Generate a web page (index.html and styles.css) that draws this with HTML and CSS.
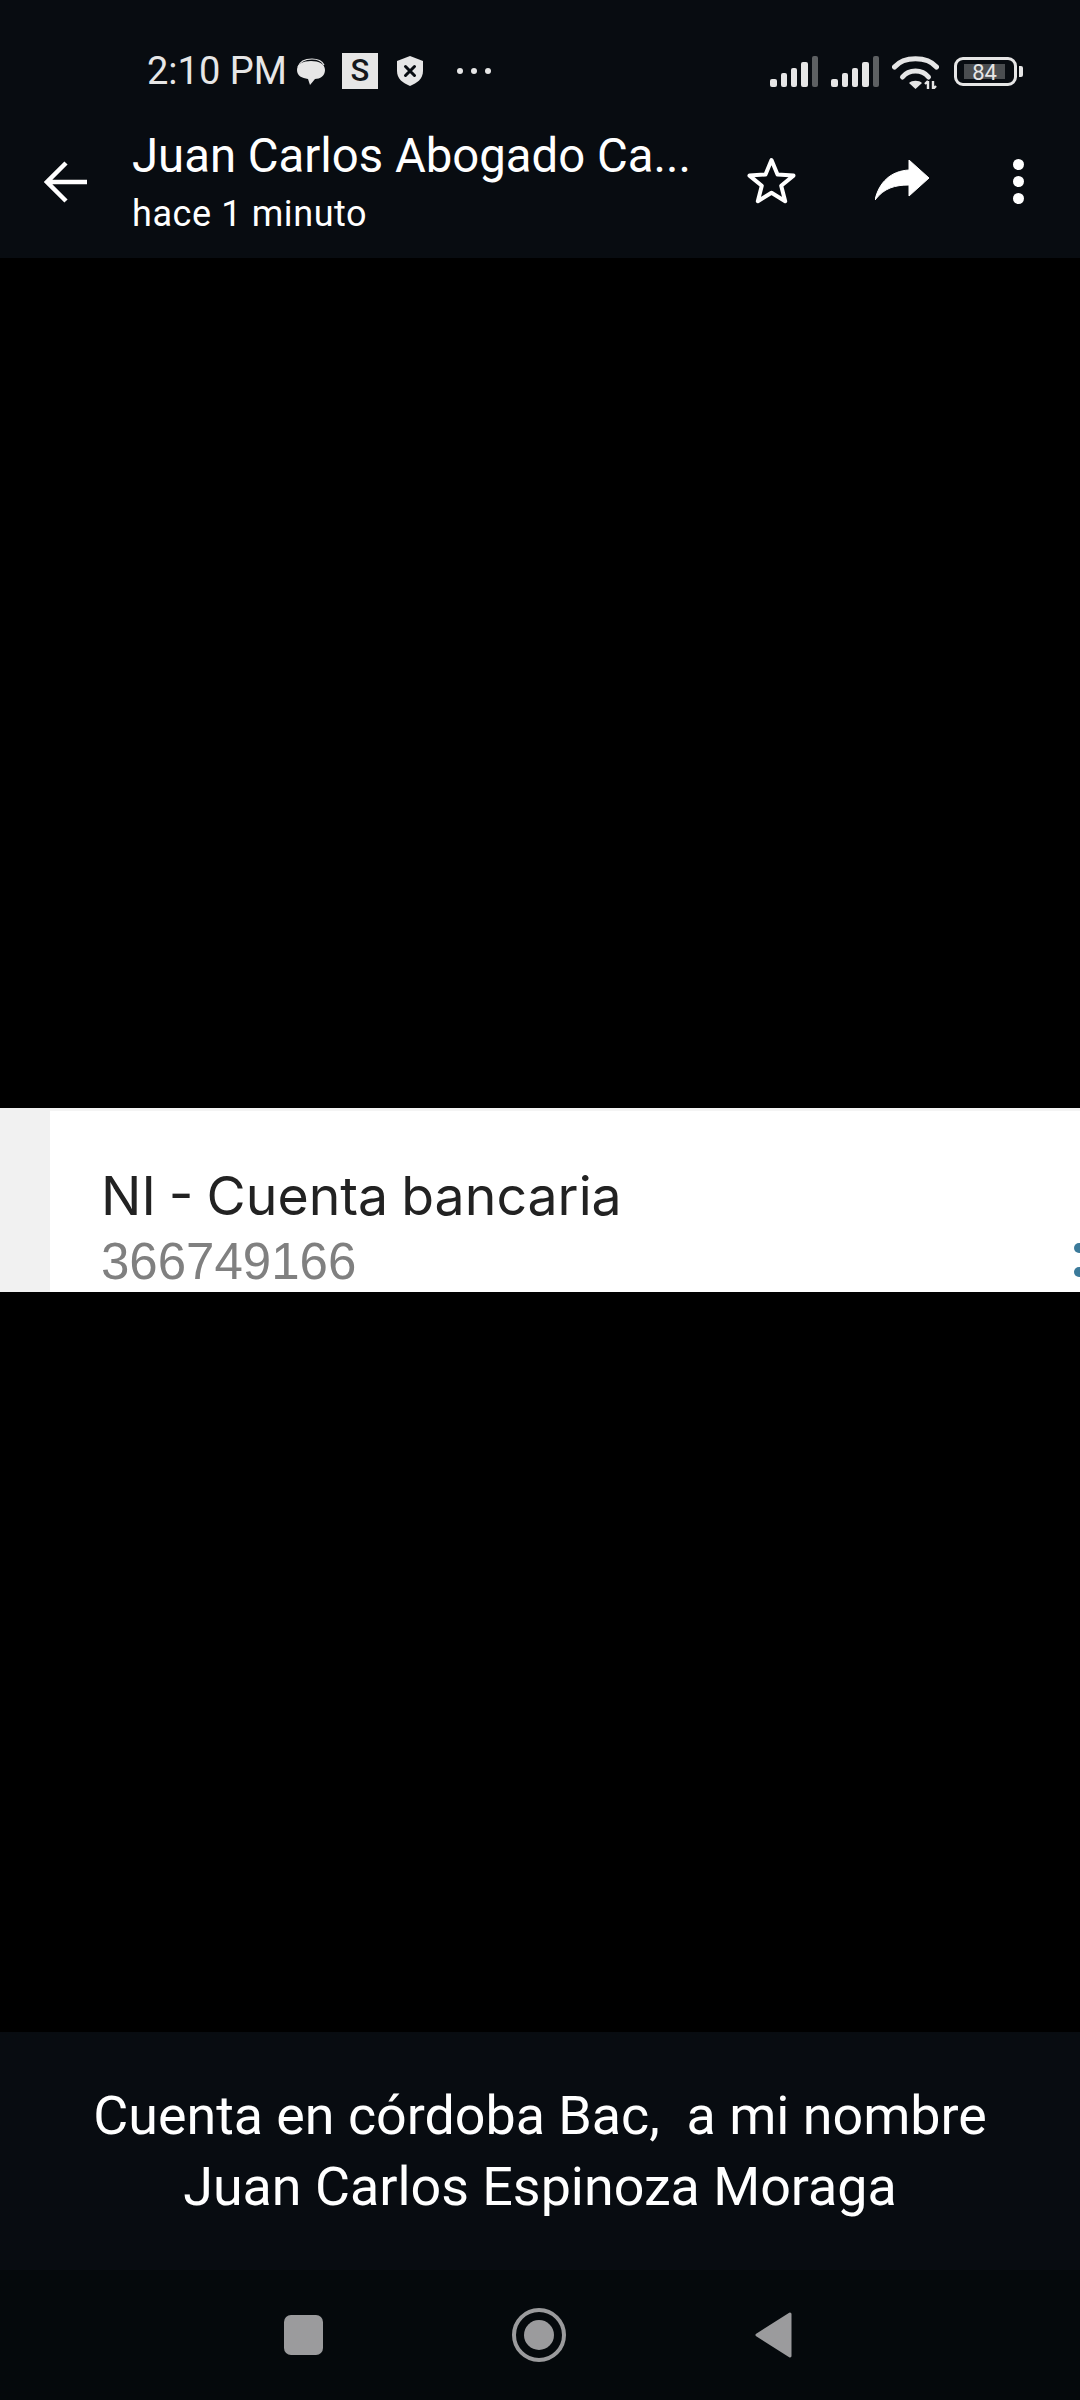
FILE: index.html
```html
<!DOCTYPE html>
<html lang="es">

<head>
  <meta charset="UTF-8">
  <meta name="viewport" content="width=device-width, initial-scale=1">
  <title>Juan Carlos Abogado Ca...</title>
  <link rel="stylesheet" href="styles.css">
</head>

<body>
  <div id="app">
    <div class="status-bar">
      <div class="status-left">
        <span class="time">2:10 PM</span>
        <svg class="ic-chat" width="28" height="27" viewBox="0 0 28 27">
          <path d="M1 9C3 3 8 1 15 1C21 1 25 3 27 7" fill="none" stroke="#e6e6e6" stroke-width="1.2" />
          <path d="M0 12C0 6 6 3 14 3C22 3 28 6 28 12C28 18 23 21 18 21L13 27L11 21C5 20 0 18 0 12Z" fill="#e6e6e6" />
        </svg>
        <span class="s-badge">S</span>
        <svg class="ic-shield" width="26" height="30" viewBox="0 0 26 30">
          <path d="M13 0L26 5V15C26 23 20 27 13 30C6 27 0 23 0 15V5Z" fill="#e6e6e6" />
          <path d="M8.5 10.5L17.5 19.5M17.5 10.5L8.5 19.5" stroke="#080c11" stroke-width="3" stroke-linecap="round" />
        </svg>
        <span class="more-dots"><i></i><i></i><i></i></span>
      </div>
      <div class="status-right">
        <svg class="ic-signal" width="48" height="31" viewBox="0 0 48 31">
          <rect x="0" y="23" width="7" height="8" rx="2" fill="#e6e6e6" />
          <rect x="11" y="17" width="6" height="14" rx="2" fill="#e6e6e6" />
          <rect x="21" y="12" width="6" height="19" rx="2" fill="#e6e6e6" />
          <rect x="31" y="6" width="7" height="25" rx="2" fill="#e6e6e6" />
          <rect x="42" y="0" width="6" height="31" rx="2" fill="#5d6062" />
        </svg>
        <svg class="ic-signal" width="48" height="31" viewBox="0 0 48 31">
          <rect x="0" y="23" width="7" height="8" rx="2" fill="#e6e6e6" />
          <rect x="11" y="17" width="6" height="14" rx="2" fill="#e6e6e6" />
          <rect x="21" y="12" width="6" height="19" rx="2" fill="#e6e6e6" />
          <rect x="31" y="6" width="7" height="25" rx="2" fill="#e6e6e6" />
          <rect x="42" y="0" width="6" height="31" rx="2" fill="#5d6062" />
        </svg>
        <svg class="ic-wifi" width="47" height="35" viewBox="0 0 47 35">
          <path d="M2.5 13C12 2 35 2 44.5 13" fill="none" stroke="#e6e6e6" stroke-width="5" stroke-linecap="round" />
          <path d="M10.5 23C17 15 30 15 36.5 23" fill="none" stroke="#e6e6e6" stroke-width="5" stroke-linecap="round" />
          <path d="M23.5 35L17 29C20 26 27 26 30 29Z" fill="#e6e6e6" />
          <path d="M36 35V27M33 30L36 27M41 27V35M41 35L44 32" fill="none" stroke="#e6e6e6" stroke-width="2.4" />
        </svg>
        <div class="battery">
          <div class="battery-box">
            <div class="battery-fill">84</div>
          </div>
          <div class="battery-cap"></div>
        </div>
      </div>
    </div>

    <header class="toolbar">
      <svg class="ic-back" width="44" height="42" viewBox="0 0 44 42">
        <path d="M43 21H4M22 2L3 21L22 40" fill="none" stroke="#fff" stroke-width="4.5" />
      </svg>
      <div class="title-block">
        <div class="title">Juan Carlos Abogado Ca...</div>
        <div class="subtitle">hace 1 minuto</div>
      </div>
      <svg class="ic-star" width="49" height="47" viewBox="0 0 49 47">
        <path d="M24.5 3L30.5 17.5L46.5 18.6L34.2 28.7L38.2 44.2L24.5 35.8L10.8 44.2L14.8 28.7L2.5 18.6L18.5 17.5Z"
          fill="none" stroke="#fff" stroke-width="4" stroke-linejoin="round" />
      </svg>
      <svg class="ic-share" width="54" height="40" viewBox="0 0 54 40">
        <path d="M34 0L54 18L34 36V25C20 25 9 28 0 40C4 22 16 11 34 10Z" fill="#fff" stroke="#fff" stroke-width="1" stroke-linejoin="round" />
      </svg>
      <span class="menu-dots"><i></i><i></i><i></i></span>
    </header>

    <main class="viewer">
      <div class="shot">
        <div class="shot-side"></div>
        <div class="shot-body">
          <div class="shot-title">NI - Cuenta bancaria</div>
          <div class="shot-number">366749166</div>
          <span class="shot-chevron"><i></i><i></i></span>
        </div>
      </div>
    </main>

    <div class="caption">Cuenta en córdoba Bac,&nbsp; a mi nombre<br>Juan Carlos Espinoza Moraga</div>

    <nav class="nav-bar">
      <span class="nav-square"></span>
      <span class="nav-home"><i></i></span>
      <svg class="nav-back" width="37" height="46" viewBox="0 0 37 46">
        <path d="M35 2L2 23L35 44Z" fill="#9b9b9d" stroke="#9b9b9d" stroke-width="3" stroke-linejoin="round" />
      </svg>
    </nav>
  </div>
</body>

</html>
```

FILE: styles.css
```css
* {
  box-sizing: border-box;
}

html,
body {
  margin: 0;
  background: #000;
}

#app {
  width: 1080px;
  height: 2400px;
  display: flex;
  flex-direction: column;
  overflow: hidden;
  font-family: Roboto, sans-serif;
  color: #fff;
}

/* status bar */
.status-bar {
  height: 106px;
  padding: 36px 57px 0 147px;
  background: #080c11;
  display: flex;
  justify-content: space-between;
  align-items: center;
}

.status-left,
.status-right {
  display: flex;
  align-items: center;
}

.time {
  font-size: 38px;
  color: #e6e6e6;
  line-height: 40px;
  width: 150px;
}

.ic-chat {
  margin-right: 17px;
}

.s-badge {
  width: 36px;
  height: 36px;
  margin-right: 19px;
  background: #e6e6e6;
  color: #14181c;
  font-size: 31px;
  font-weight: 500;
  line-height: 36px;
  text-align: center;
}

.more-dots {
  display: flex;
  gap: 8px;
  margin-left: 34px;
}

.more-dots i {
  width: 6px;
  height: 6px;
  border-radius: 50%;
  background: #e6e6e6;
}

.status-right {
  gap: 13px;
}

.status-right .ic-wifi {
  margin-right: 2px;
}

.battery {
  display: flex;
  align-items: center;
  gap: 2px;
}

.battery-box {
  width: 63px;
  height: 29px;
  padding: 4px 5px;
  border: 3px solid #e6e6e6;
  border-radius: 9px;
}

.battery-fill {
  width: 41px;
  height: 100%;
  margin-left: 2px;
  background: #4a4d50;
  color: #e6e6e6;
  font-size: 22px;
  line-height: 18px;
  text-align: center;
}

.battery-cap {
  width: 4px;
  height: 11px;
  background: #e6e6e6;
  border-radius: 0 2px 2px 0;
}

/* toolbar */
.toolbar {
  height: 152px;
  padding: 0 56px 0 44px;
  background: #080c11;
  display: flex;
  align-items: center;
}

.ic-star,
.ic-share {
  margin-bottom: 4px;
}

.title-block {
  width: 615px;
  margin-left: 44px;
  margin-top: 5px;
}

.title {
  font-size: 47.3px;
  line-height: 52px;
}

.subtitle {
  font-size: 36px;
  letter-spacing: 0.6px;
  line-height: 50px;
  margin-top: 7px;
}

.ic-share {
  margin-left: 79px;
}

.menu-dots {
  display: flex;
  flex-direction: column;
  gap: 6px;
  margin-left: 84px;
  margin-bottom: 2px;
}

.menu-dots i {
  width: 11px;
  height: 11px;
  border-radius: 50%;
  background: #fff;
}

/* picture */
.viewer {
  flex: 1;
  padding-top: 850px;
  background: #000;
}

.shot {
  height: 184px;
  display: flex;
  background: #fff;
  overflow: hidden;
}

.shot-side {
  width: 50px;
  background: #f1f1f1;
}

.shot-body {
  flex: 1;
  position: relative;
  padding: 54px 0 0 51px;
  border-top: 3px solid #f4f4f4;
}

.shot-title {
  font-family: Inter, sans-serif;
  font-size: 53.6px;
  word-spacing: -2px;
  line-height: 62px;
  color: #222;
}

.shot-number {
  font-family: "Liberation Sans", sans-serif;
  font-size: 51px;
  line-height: 70px;
  color: #808080;
}

.shot-chevron {
  position: absolute;
  right: -4px;
  top: 132px;
  display: flex;
  flex-direction: column;
  gap: 14px;
}

.shot-chevron i {
  width: 10px;
  height: 10px;
  border-radius: 50%;
  background: #3b7a9a;
}

/* caption */
.caption {
  height: 238px;
  padding-top: 48px;
  background: #080c11;
  font-size: 53.8px;
  line-height: 71px;
  text-align: center;
}

/* nav bar */
.nav-bar {
  height: 130px;
  background: #05090c;
  display: flex;
  align-items: center;
  padding: 0 0 0 284px;
}

.nav-square {
  width: 39px;
  height: 40px;
  border-radius: 7px;
  background: #9b9b9d;
}

.nav-home {
  width: 54px;
  height: 54px;
  margin-left: 189px;
  border: 4px solid #9b9b9d;
  border-radius: 50%;
  display: flex;
  align-items: center;
  justify-content: center;
}

.nav-home i {
  width: 30px;
  height: 30px;
  border-radius: 50%;
  background: #9b9b9d;
}

.nav-back {
  margin-left: 189px;
}
```
